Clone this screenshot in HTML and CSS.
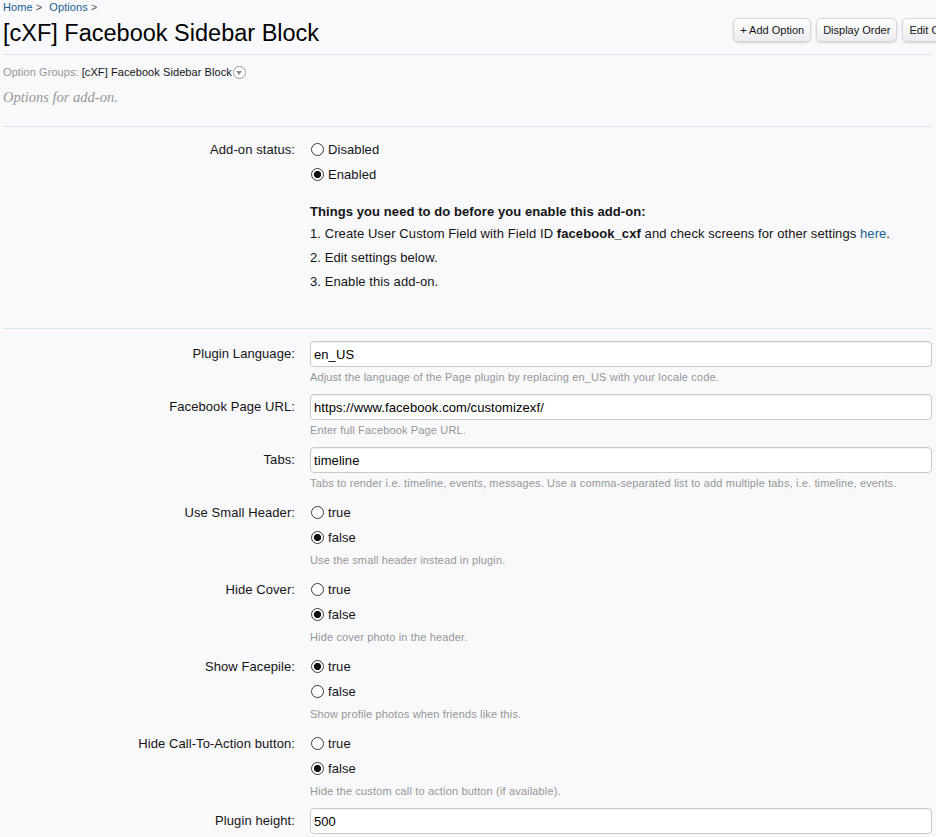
FILE: index.html
```html
<!DOCTYPE html>
<html lang="en">
<head>
    <meta charset="UTF-8">
    <title>[cXF] Facebook Sidebar Block</title>
    <link rel="stylesheet" href="styles.css">
</head>
<body>
<div class="page">
    <nav class="breadcrumb">
        <a href="#">Home</a><span class="arrow">&gt;</span>
        <a href="#">Options</a><span class="arrow">&gt;</span>
    </nav>

    <div class="title-bar">
        <h1>[cXF] Facebook Sidebar Block</h1>
        <div class="top-ctrl">
            <a href="#" class="button">+ Add Option</a>
            <a href="#" class="button">Display Order</a>
            <a href="#" class="button">Edit Group</a>
        </div>
    </div>

    <div class="option-groups">
        <span class="muted">Option Groups:</span>
        <span>[cXF] Facebook Sidebar Block</span>
        <span class="popup-icon"></span>
    </div>
    <p class="group-explain">Options for add-on.</p>

    <form>
        <fieldset class="section">
            <dl class="ctrl-unit">
                <dt>Add-on status:</dt>
                <dd>
                    <ul class="radios">
                        <li><label><input type="radio" name="status"> Disabled</label></li>
                        <li><label><input type="radio" name="status" checked> Enabled</label></li>
                    </ul>
                    <div class="notice">
                        <h4>Things you need to do before you enable this add-on:</h4>
                        <ol>
                            <li>Create User Custom Field with Field ID <b>facebook_cxf</b> and check screens for other settings <a href="#">here</a>.</li>
                            <li>Edit settings below.</li>
                            <li>Enable this add-on.</li>
                        </ol>
                    </div>
                </dd>
            </dl>
        </fieldset>

        <fieldset class="section">
            <dl class="ctrl-unit">
                <dt>Plugin Language:</dt>
                <dd>
                    <input type="text" class="textbox" value="en_US">
                    <p class="hint">Adjust the language of the Page plugin by replacing en_US with your locale code.</p>
                </dd>
            </dl>
            <dl class="ctrl-unit">
                <dt>Facebook Page URL:</dt>
                <dd>
                    <input type="text" class="textbox" value="https://www.facebook.com/customizexf/">
                    <p class="hint">Enter full Facebook Page URL.</p>
                </dd>
            </dl>
            <dl class="ctrl-unit">
                <dt>Tabs:</dt>
                <dd>
                    <input type="text" class="textbox" value="timeline">
                    <p class="hint">Tabs to render i.e. timeline, events, messages. Use a comma-separated list to add multiple tabs, i.e. timeline, events.</p>
                </dd>
            </dl>
            <dl class="ctrl-unit">
                <dt>Use Small Header:</dt>
                <dd>
                    <ul class="radios">
                        <li><label><input type="radio" name="small"> true</label></li>
                        <li><label><input type="radio" name="small" checked> false</label></li>
                    </ul>
                    <p class="hint">Use the small header instead in plugin.</p>
                </dd>
            </dl>
            <dl class="ctrl-unit">
                <dt>Hide Cover:</dt>
                <dd>
                    <ul class="radios">
                        <li><label><input type="radio" name="cover"> true</label></li>
                        <li><label><input type="radio" name="cover" checked> false</label></li>
                    </ul>
                    <p class="hint">Hide cover photo in the header.</p>
                </dd>
            </dl>
            <dl class="ctrl-unit">
                <dt>Show Facepile:</dt>
                <dd>
                    <ul class="radios">
                        <li><label><input type="radio" name="facepile" checked> true</label></li>
                        <li><label><input type="radio" name="facepile"> false</label></li>
                    </ul>
                    <p class="hint">Show profile photos when friends like this.</p>
                </dd>
            </dl>
            <dl class="ctrl-unit">
                <dt>Hide Call-To-Action button:</dt>
                <dd>
                    <ul class="radios">
                        <li><label><input type="radio" name="cta"> true</label></li>
                        <li><label><input type="radio" name="cta" checked> false</label></li>
                    </ul>
                    <p class="hint">Hide the custom call to action button (if available).</p>
                </dd>
            </dl>
            <dl class="ctrl-unit">
                <dt>Plugin height:</dt>
                <dd>
                    <input type="text" class="textbox" value="500">
                </dd>
            </dl>
        </fieldset>
    </form>
</div>
</body>
</html>
```

FILE: styles.css
```css
* {
    margin: 0;
    padding: 0;
    box-sizing: border-box;
}

html {
    overflow-x: hidden;
}

body {
    background: #f9f9fc;
    color: #141414;
    font-family: 'Liberation Sans', Arial, sans-serif;
    font-size: 13px;
    letter-spacing: 0.08px;
}

a {
    color: #176093;
    text-decoration: none;
}

.page {
    padding: 0 4px 0 3px;
}

/* breadcrumb + title */
.breadcrumb {
    font-size: 11px;
    line-height: 14px;
}

.breadcrumb .arrow {
    color: #555;
    margin: 0 4px 0 3px;
}

.title-bar {
    display: flex;
    justify-content: space-between;
    align-items: flex-start;
    margin-top: 4px;
    padding-bottom: 7px;
    border-bottom: 1px solid #d7e6f3;
}

.title-bar h1 {
    margin-top: 1px;
    font-size: 23.5px;
    font-weight: normal;
    line-height: 28px;
    letter-spacing: 0;
    color: #000;
}

.top-ctrl {
    display: flex;
    gap: 5px;
    margin-right: -37px;
}

.button {
    display: block;
    height: 24px;
    padding: 0 6px;
    font-size: 11px;
    line-height: 22px;
    letter-spacing: 0;
    color: #141414;
    border: 1px solid #d6d6de;
    border-radius: 5px;
    background: linear-gradient(#ffffff, #ececf1);
    box-shadow: 0 1px 2px rgba(0,0,0,0.15);
    white-space: nowrap;
}

.option-groups {
    display: flex;
    align-items: center;
    margin-top: 10px;
    font-size: 11px;
    line-height: 14px;
}

.option-groups .muted {
    color: #969696;
    margin-right: 3px;
}

.popup-icon {
    position: relative;
    width: 13px;
    height: 13px;
    margin-left: 1px;
    border: 1px solid #9a9a9a;
    border-radius: 50%;
    background: #fff;
}

.popup-icon::after {
    content: '';
    position: absolute;
    left: 2.5px;
    top: 4px;
    border-left: 3.5px solid transparent;
    border-right: 3.5px solid transparent;
    border-top: 4px solid #8a8a8a;
}

.group-explain {
    margin-top: 10px;
    font-family: 'Liberation Serif', Georgia, serif;
    font-style: italic;
    font-size: 14.5px;
    line-height: 16px;
    letter-spacing: 0;
    color: #969696;
}

/* form sections */
.section {
    border: none;
    border-top: 1px solid #d7e6f3;
}

.section:first-child {
    margin-top: 21px;
    padding-top: 10px;
    padding-bottom: 24px;
}

.section + .section {
    padding-top: 12px;
}

.ctrl-unit {
    display: grid;
    grid-template-columns: 292px 1fr;
    column-gap: 15px;
    margin-bottom: 10px;
}

.ctrl-unit dt {
    text-align: right;
    line-height: 25px;
}

.textbox {
    display: block;
    width: 100%;
    height: 26px;
    padding: 0 3px;
    font-family: inherit;
    font-size: 13px;
    letter-spacing: 0.08px;
    color: #000;
    background: #fff;
    border: 1px solid #c9c9cc;
    border-radius: 4px;
    box-shadow: inset 0 1px 1px rgba(0,0,0,0.06);
}

.hint {
    margin-top: 3px;
    font-size: 11px;
    line-height: 14px;
    letter-spacing: 0.15px;
    color: #969696;
}

.radios {
    list-style: none;
}

.radios li {
    height: 25px;
    display: flex;
    align-items: center;
}

.radios label {
    display: flex;
    align-items: center;
}

.radios input {
    appearance: none;
    width: 13px;
    height: 13px;
    margin: 0 4px 0 1px;
    border: 1px solid #3a3a3a;
    border-radius: 50%;
    background: #fff;
}

.radios input:checked {
    background: radial-gradient(circle, #111 0 3.3px, #fff 3.9px);
}

/* add-on notice */
.notice {
    margin-top: 15px;
}

.notice h4 {
    font-size: 13px;
    line-height: 20px;
}

.notice ol {
    list-style: decimal inside;
}

.notice ol li {
    line-height: 24px;
}
```
